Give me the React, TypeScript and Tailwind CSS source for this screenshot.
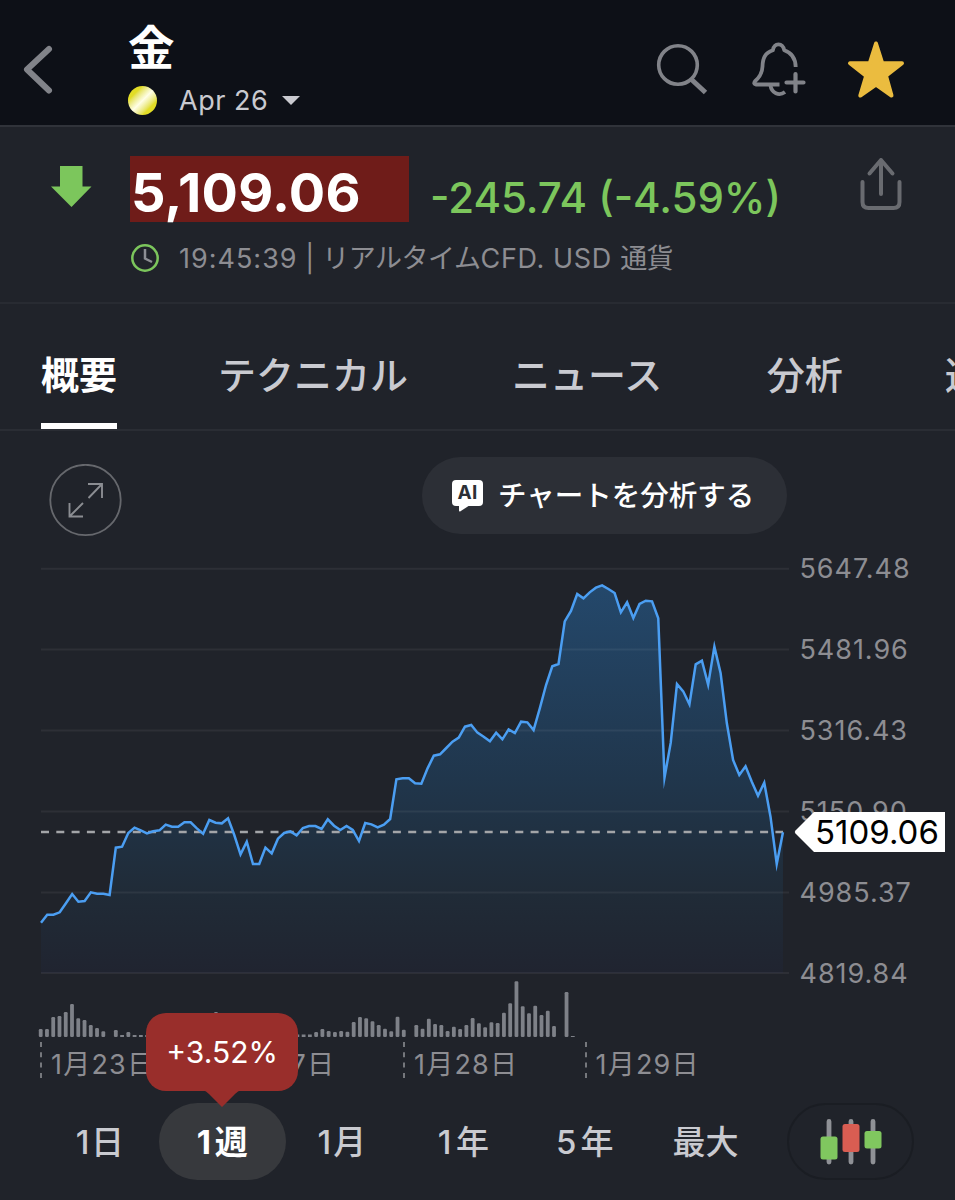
const LINE = [
  1088, 1064, 1064, 1057, 1030, 1002, 1025, 1023, 997, 1001, 1001, 1005, 863, 860, 819, 803, 811, 820, 814, 811,
  794, 800, 800, 787, 787, 805, 821, 780, 788, 790, 775, 825, 883, 845, 912, 912, 863, 880, 836, 819, 814, 826, 804,
  798, 798, 807, 778, 797, 810, 798, 810, 843, 789, 793, 802, 794, 777, 658, 655, 655, 670, 671, 625, 587, 583, 564,
  545, 533, 500, 495, 518, 530, 544, 518, 538, 508, 519, 485, 487, 510, 445, 375, 319, 312, 184, 153, 102, 115, 97,
  83, 76, 87, 99, 157, 127, 174, 132, 122, 124, 175, 653, 548, 372, 394, 433, 313, 302, 374, 260, 340, 490, 600, 645,
  619, 665, 707, 668, 770, 912, 817,
];

const VOLUME = [
  8, 8, 20, 21, 25, 33, 18.7, 17, 12, 9, 5.7, 0, 7, 2, 5, 2, 2, 2, 3, 4, 5, 6, 5, 4, 6, 8, 12, 18, 25, 14, 10, 8, 6, 5,
  4, 3, 3, 2, 2, 2, 2, 2.5, 2.5, 2.5, 5, 8, 6, 5, 6, 5.3, 15, 20, 18.7, 15.7, 12, 8.3, 5.7, 20.3, 7.3, 0, 12, 8.3,
  18.3, 13, 12, 6, 10.3, 8, 12, 19, 13.7, 9.7, 14.7, 14, 24.3, 33.7, 55.7, 30.7, 23.7, 31.3, 22, 26.3, 11, 0, 45, 1,
];

const GRID = [28.7, 109.6, 190.5, 271.5, 352.4, 433];
const SCALE = ["5647.48", "5481.96", "5316.43", "5150.90", "4985.37", "4819.84"];
const DATES = ["1月23日", "1月27日", "1月28日", "1月29日"];
const points = LINE.map((v, i) => `${(41 + i * 6.235).toFixed(2)},${(20 + v / 3).toFixed(2)}`).join(" ");

function Header() {
  return (
    <header className="flex h-[127px] shrink-0 border-b-2 border-[#30333a] bg-[#0d1017]">
      <svg className="mt-[44px] ml-[22px] h-[52px] w-[32px]" viewBox="0 0 32 52" fill="none" stroke="#818389" strokeWidth="6" strokeLinecap="round" strokeLinejoin="round">
        <path d="M27 5 L5 25.5 L27 46.5" />
      </svg>
      <div className="ml-[74px] flex grow flex-col">
        <h1 className="mt-[20px] h-[56px] text-[46.500px] leading-[56px] font-bold text-white">金</h1>
        <div className="mt-[9px] flex h-[30px] items-center">
          <span className="h-[29px] w-[29px] rounded-full bg-linear-to-br from-[#e2dd26] from-25% via-[#fffee6] via-50% to-[#e2dd26] to-75%" />
          <span className="ml-[22px] pt-px text-[27px] leading-[30px] tracking-[0.500px] text-[#c9cad0]">Apr 26</span>
          <svg className="ml-[14px] h-[9px] w-[18px]" viewBox="0 0 18 9"><path d="M0 0H18L9 9Z" fill="#c9cad0" /></svg>
        </div>
      </div>
      <svg className="mt-[40px] h-[60px] w-[60px]" viewBox="652 40 60 60" fill="none" stroke="#818389">
        <circle cx="678" cy="65" r="19.300" strokeWidth="3.600" />
        <path d="M691.500 79.500 L705.500 92.500" strokeWidth="5" />
      </svg>
      <svg className="mt-[40px] ml-[36px] h-[60px] w-[62px]" viewBox="748 40 62 60" fill="none" stroke="#818389" strokeWidth="3.800" strokeLinecap="butt" strokeLinejoin="round">
        <path d="M779.500 84.500H756Q753 84.200 755 81.200C760.500 76.500 762.300 72.500 762.500 66.500C762.700 58 765 53 772.800 50.300C773.500 46.500 775.500 44.300 778.500 44.300C781.500 44.300 783.500 46.500 784.300 50.300C792 53 795.500 58.500 795.700 67" />
        <path d="M770.500 85.500C771.500 93 779 96.500 785 92" />
        <path d="M795.500 74V91.500M786.500 82.500H803.500" strokeLinecap="round" strokeWidth="4.200" />
      </svg>
      <svg className="mt-[38px] mr-[48px] ml-[36px] h-[64px] w-[61px]" viewBox="846 38 61 64" fill="#ebbc3f" stroke="#ebbc3f" strokeWidth="4" strokeLinejoin="round">
        <path d="M876 43.500 L882.200 63 L902 63.200 L886 75.800 L891.500 95.500 L876 84.500 L860.300 95.500 L866.200 75.800 L850 63.200 L869.800 63Z" />
      </svg>
    </header>
  );
}

function Quote() {
  return (
    <section className="flex h-[177px] shrink-0 border-b-2 border-[#282b32]">
      <svg className="mt-[39px] ml-[51px] h-[42px] w-[41px]" viewBox="0 0 41 42"><path d="M9 0H31.500V20.500H40.500L20.500 41L0 20.500H9Z" fill="#7cc65c" /></svg>
      <div className="ml-[38px] grow">
        <div className="mt-[29px] flex h-[66px]">
          <div className="h-[66px] w-[279px] bg-[#6f1c19] pl-px text-[54px] leading-[74px] font-bold tracking-[0.300px] text-white">5,109.06</div>
          <div className="ml-[21px] text-[42px] leading-[83px] font-medium whitespace-nowrap text-[#7cc65c]">-245.74 (-4.59%)</div>
        </div>
        <div className="mt-[18px] flex h-[36px] items-center">
          <svg className="ml-px h-[28px] w-[28px]" viewBox="0 0 28 28" fill="none" strokeWidth="2.500">
            <circle cx="14" cy="14" r="12.700" stroke="#7cc65c" />
            <path d="M14 5V14.500L21 18" stroke="#8d8f94" />
          </svg>
          <p className="ml-[20px] pt-px text-[27px] leading-[36px] tracking-[1px] whitespace-pre text-[#8d8d92]">
            <span>19:45:39</span>
            <span className="tracking-[0.200px]"> | </span>
            <span className="tracking-[-0.500px]">リアルタイム</span>
            <span className="tracking-[0.650px]">CFD. USD </span>
            <span className="tracking-[-0.700px]">通貨</span>
          </p>
        </div>
      </div>
      <svg className="mt-[29px] mr-[50px] h-[56px] w-[48px]" viewBox="857 156 48 56" fill="none" stroke="#696b70" strokeWidth="4" strokeLinecap="round" strokeLinejoin="round">
        <path d="M862.500 182V202Q862.500 208 868.500 208H893.500Q899.500 208 899.500 202V182" />
        <path d="M881 194V160M869.500 173.500L881 160L892.500 173.500" />
      </svg>
    </section>
  );
}

function Tabs() {
  return (
    <nav className="flex h-[127px] shrink-0 overflow-hidden border-b-2 border-[#2a2d34] pt-[43px] pl-[41px] text-[38px] leading-[56px] font-medium whitespace-nowrap text-[#c9cad0]">
      <div className="flex h-[82px] shrink-0 flex-col justify-between font-bold text-white">
        概要
        <span className="h-[6px] bg-white" />
      </div>
      <span className="ml-[101px] shrink-0">テクニカル</span>
      <span className="ml-[104px] shrink-0">ニュース</span>
      <span className="ml-[104.500px] shrink-0">分析</span>
      <span className="ml-[102px] shrink-0">過去データ</span>
    </nav>
  );
}

function ChartTools() {
  return (
    <div className="flex h-[109px] shrink-0 items-start pt-[26px] pl-[49px]">
      <button className="mt-[7px] h-[73px] w-[73px]" aria-label="Expand chart">
        <svg className="h-[73px] w-[73px]" viewBox="0 0 73 73" fill="none">
          <circle cx="36.500" cy="36" r="35.200" stroke="#66686d" strokeWidth="1.800" />
          <path d="M39 20H53V34M53 20L39.500 34M20.500 39V52.500H34M20.500 52.500L34 39" stroke="#8b8d92" strokeWidth="1.900" />
        </svg>
      </button>
      <button className="ml-[300px] flex h-[77px] w-[365px] items-center rounded-[39px] bg-[#2c2f36] pl-[30px] text-white">
        <span className="relative mb-[5px] flex h-[26px] w-[31px] items-center justify-center rounded-[4px] bg-white text-[19px] leading-[26px] font-bold tracking-[0.300px] text-[#2c2f36]">
          AI
          <svg className="absolute top-[25px] left-[7px] h-[7px] w-[12px]" viewBox="0 0 12 7"><path d="M0 0H11L1.500 6.300Q0 7 0 5.500Z" fill="white" /></svg>
        </span>
        <span className="ml-[15px] text-[28.500px] leading-[40px] font-medium whitespace-nowrap">チャートを分析する</span>
      </button>
    </div>
  );
}

function Chart() {
  return (
    <section className="relative flex h-[502px] shrink-0">
      <svg className="h-[502px] w-[790px] shrink-0" viewBox="0 0 790 502" fill="none">
        <defs>
          <linearGradient id="area" x1="0" y1="45" x2="0" y2="433" gradientUnits="userSpaceOnUse">
            <stop offset="0" stopColor="#24486b" />
            <stop offset="0.500" stopColor="#20364c" />
            <stop offset="0.800" stopColor="#202b37" />
            <stop offset="1" stopColor="#202430" />
          </linearGradient>
        </defs>
        <polygon points={`41,433 ${points} 783,433`} fill="url(#area)" />
        {GRID.map((y) => <path key={y} d={`M41 ${y}H789`} stroke="#ffffff" strokeOpacity="0.060" strokeWidth="2" />)}
        <path d="M41 292H783" stroke="#a3a5a8" strokeWidth="2.500" strokeDasharray="8 7.300" />
        <polyline points={points} stroke="#4b9ef2" strokeWidth="2.500" strokeLinejoin="miter" strokeMiterlimit="12" />
        {VOLUME.map((h, i) => h > 0 && (
          <rect key={i} x={38.800 + i * 6.260} y={497 - h} width="3.800" height={h} rx={h > 3 ? 1.200 : 0} fill="#7e8188" />
        ))}
      </svg>
      <ul className="ml-[9.500px] flex flex-col pt-[9px] text-[27px] leading-[40px] tracking-[0.950px] text-[#8d8d92]">
        {SCALE.map((v) => <li key={v} className="mb-[41px] h-[40px]">{v}</li>)}
      </ul>
      <div className="absolute top-[272px] left-[794px] flex">
        <svg className="h-[40px] w-[21px]" viewBox="0 0 21 40"><path d="M1.500 21.500Q0 20 1.500 18.500L20 0H21V40H20Z" fill="white" /></svg>
        <span className="-ml-px h-[40px] w-[131px] bg-white pl-px text-[33px] leading-[41px] text-black">5109.06</span>
      </div>
    </section>
  );
}

function Dates() {
  return (
    <div className="flex h-[48px] shrink-0 pl-[40px] text-[27px] leading-[46px] tracking-[1.200px] whitespace-nowrap text-[#8d8d92]">
      {DATES.map((d) => (
        <div key={d} className="flex w-[181.500px] shrink-0">
          <svg className="h-[36px] w-[2px]" viewBox="0 0 2 36"><path d="M1 0V36" stroke="#75777c" strokeWidth="2" strokeDasharray="5 5.300" /></svg>
          <span className="ml-[9px]">{d}</span>
        </div>
      ))}
    </div>
  );
}

function Ranges() {
  return (
    <div className="flex h-[77px] shrink-0 pl-[40px] text-[33px] leading-[79px] font-medium text-[#c9cad0]">
      <div className="grid h-[77px] w-[727px] grid-cols-6 grid-rows-[77px] text-center whitespace-nowrap">
        <span className="tracking-[1.500px]">1日</span>
        <span className="relative -mr-[4px] -ml-[2px] rounded-[39px] bg-[#37393d] font-bold text-white">
          <span className="pl-[3px] tracking-[4px]">1週</span>
          <span className="absolute -top-[90px] -left-[13px] h-[77.500px] w-[152px] rounded-[20px] bg-[#992e2b] text-[30px] leading-[79px] font-normal">
            +3.52%
            <svg className="absolute top-[77px] left-[57px] h-[18px] w-[38px]" viewBox="0 0 38 18"><path d="M0 0H38Q35 1 32 4L19 17L6 4Q3 1 0 0Z" fill="#992e2b" /></svg>
          </span>
        </span>
        <span className="tracking-[2px]">1月</span>
        <span className="pl-[3px] tracking-[4.500px]">1年</span>
        <span className="pl-[3px] tracking-[4px]">5年</span>
        <span className="pr-[2px]">最大</span>
      </div>
      <button className="ml-[20px] flex h-[77px] w-[127px] items-center justify-center rounded-[39px] border-2 border-[#1a1d23]" aria-label="Chart type">
        <svg className="h-[50px] w-[64px]" viewBox="0 0 64 50">
          <path d="M10 4.500V45M32 4.500V45M54 4.500V45" stroke="#8f9196" strokeWidth="4.800" strokeLinecap="round" />
          <rect x="1.500" y="19.500" width="17" height="23" rx="2.500" fill="#80c75f" />
          <rect x="23.500" y="7" width="17" height="28" rx="2.500" fill="#d95d52" />
          <rect x="45.500" y="14" width="17" height="17.500" rx="2.500" fill="#80c75f" />
        </svg>
      </button>
    </div>
  );
}

export default function App() {
  return (
    <main lang="ja" className="flex h-[1200px] w-[955px] flex-col overflow-hidden bg-[#20232a] font-['Inter','Noto_Sans_CJK_JP',sans-serif]">
      <Header />
      <Quote />
      <Tabs />
      <ChartTools />
      <Chart />
      <Dates />
      <div className="h-[13px] shrink-0" />
      <Ranges />
    </main>
  );
}
